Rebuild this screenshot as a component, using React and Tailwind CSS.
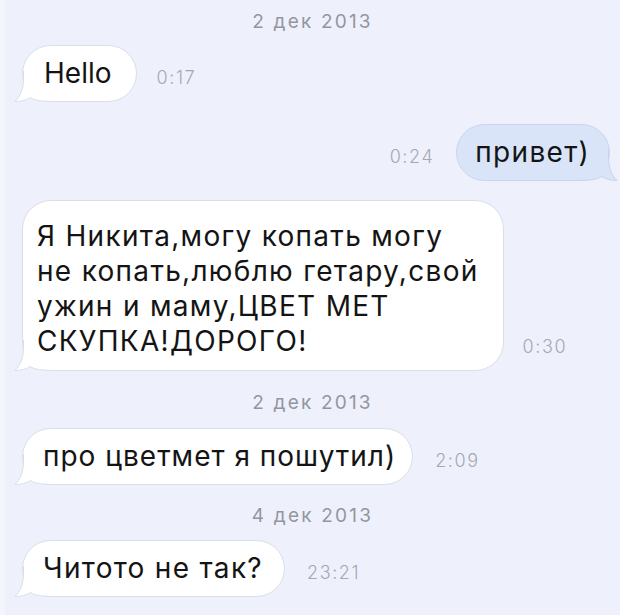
import React from "react";

const FONT = { fontFamily: 'Inter, "Liberation Sans", Arial, sans-serif' };

const TAIL_FILL = "M9.5 0 L9.5 8 C9.5 18 6 25.5 1 30.5 C7.5 30.5 12.5 29 16.5 26.5 C20.5 29.5 27 30.5 44 30.5 L44 0 Z";
const TAIL_LINE = "M9.5 0 L9.5 8 C9.5 18 6 25.5 1 30.5 C7.5 30.5 12.5 29 16.5 26.5 C20.5 29.5 27 30.5 44 30.5";

function TailLeft({ fill, stroke }) {
  return (
    <svg className="absolute left-[-9px] bottom-[-1px]" width="44" height="31" viewBox="0 0 44 31">
      <path d={TAIL_FILL} fill={fill} />
      <path d={TAIL_LINE} fill="none" stroke={stroke} strokeWidth="1" />
    </svg>
  );
}

function TailRight({ fill, stroke }) {
  return (
    <svg className="absolute right-[-9px] bottom-[-1px]" width="44" height="31" viewBox="0 0 44 31">
      <g transform="translate(44 0) scale(-1 1)">
        <path d={TAIL_FILL} fill={fill} />
        <path d={TAIL_LINE} fill="none" stroke={stroke} strokeWidth="1" />
      </g>
    </svg>
  );
}

function DateLabel({ children, className = "" }) {
  return (
    <div className={"h-[24px] flex items-center justify-center text-[19px] leading-[24px] tracking-[2.2px] text-[#9396a1] " + className}>
      {children}
    </div>
  );
}

function Time({ children }) {
  return <div className="text-[18px] leading-[20px] tracking-[1.6px] font-light text-[#a5a8b4] mb-[14px]">{children}</div>;
}

function LeftBubble({ children, className }) {
  return (
    <div className={"relative bg-white border border-[#dcdee7] rounded-[29px] text-[28px] leading-[35px] text-[#141414] " + className}>
      <TailLeft fill="#ffffff" stroke="#dcdee7" />
      <div className="relative">{children}</div>
    </div>
  );
}

export default function App() {
  return (
    <div className="w-[620px] h-[615px] bg-[#eef1fb] overflow-hidden border-l-[5px] border-[#f4f6fd]" style={FONT}>
      <div className="flex flex-col pt-[10px]">
        <DateLabel>2 дек 2013</DateLabel>

        <div className="flex items-end mt-[11px] pl-[17px] gap-[19px]">
          <LeftBubble className="pl-[21px] pr-[25px] py-[10px]">Hello</LeftBubble>
          <Time>0:17</Time>
        </div>

        <div className="flex items-end justify-end mt-[22px] pr-[10px] gap-[22px]">
          <Time>0:24</Time>
          <div className="relative bg-[#d9e4f8] border border-[#c9d5ec] rounded-[29px] text-[28px] leading-[35px] tracking-[1.3px] text-[#141414] pl-[18px] pr-[19px] py-[10px]">
            <TailRight fill="#d9e4f8" stroke="#c9d5ec" />
            <div className="relative">привет)</div>
          </div>
        </div>

        <div className="flex items-end mt-[19px] pl-[17px] gap-[19px]">
          <LeftBubble className="pl-[14px] pr-[24px] pt-[18px] pb-[11px] tracking-[1.3px]">
            Я Никита,могу копать могу
            <br />
            не копать,люблю гетару,свой
            <br />
            ужин и маму,ЦВЕТ МЕТ
            <br />
            СКУПКА!ДОРОГО!
          </LeftBubble>
          <Time>0:30</Time>
        </div>

        <DateLabel className="mt-[20px]">2 дек 2013</DateLabel>

        <div className="flex items-end mt-[13px] pl-[17px] gap-[22px]">
          <LeftBubble className="pl-[20px] pr-[16px] py-[10px] tracking-[1px]">про цветмет я пошутил)</LeftBubble>
          <Time>2:09</Time>
        </div>

        <DateLabel className="mt-[19px]">4 дек 2013</DateLabel>

        <div className="flex items-end mt-[12px] pl-[17px] gap-[22px]">
          <LeftBubble className="pl-[20px] pr-[21px] py-[10px] tracking-[1.3px]">Читото не так?</LeftBubble>
          <Time>23:21</Time>
        </div>
      </div>
    </div>
  );
}
